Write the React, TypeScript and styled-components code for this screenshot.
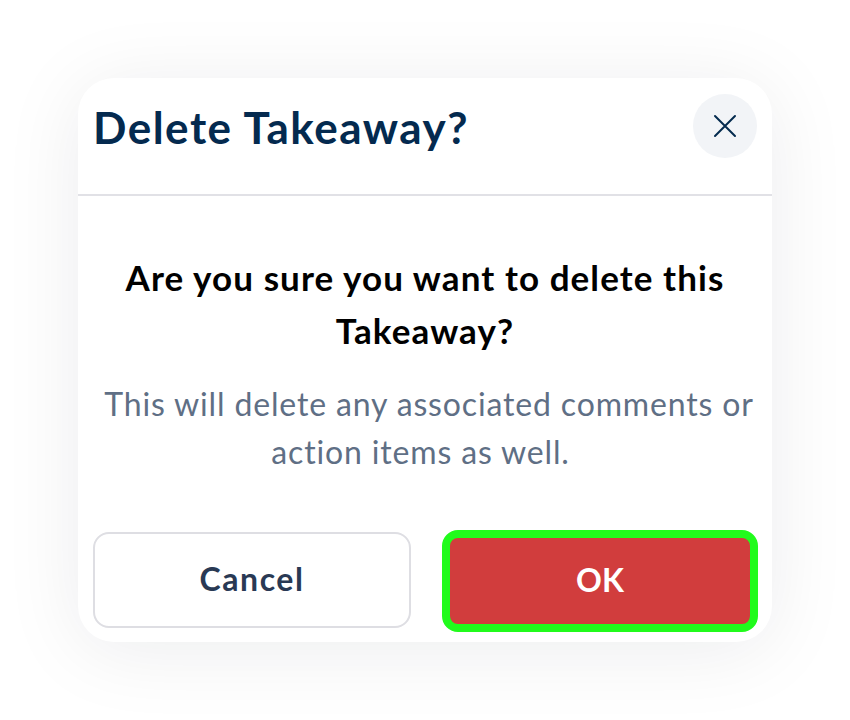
import styled, { createGlobalStyle } from "styled-components";

const GlobalStyle = createGlobalStyle`
  html, body {
    margin: 0;
    height: 100%;
    background: #ffffff;
  }
  #root {
    height: 100%;
  }
`

const Page = styled.div`
  display: flex;
  align-items: center;
  justify-content: center;
  height: 720px;
  font-family: "Lato", "Liberation Sans", sans-serif;
  font-variant-ligatures: none;
`

const Card = styled.div`
  display: flex;
  flex-direction: column;
  box-sizing: border-box;
  width: 694px;
  height: 564px;
  background: #ffffff;
  border-radius: 36px;
  box-shadow: 0 8px 80px rgba(16, 24, 40, 0.08);
`

const Header = styled.div`
  display: flex;
  align-items: flex-start;
  justify-content: space-between;
  box-sizing: border-box;
  height: 118px;
  padding: 16px 15px 0 15px;
  border-bottom: 2px solid #e1e1e6;
`

const Title = styled.h1`
  margin: 0;
  font-size: 44px;
  line-height: 66px;
  font-weight: 700;
  letter-spacing: 1.5px;
  color: #042a4f;
`

const CloseButton = styled.button`
  display: flex;
  align-items: center;
  justify-content: center;
  width: 64px;
  height: 64px;
  padding: 0;
  border: none;
  border-radius: 50%;
  background: #f2f4f7;
`

const Body = styled.div`
  display: flex;
  flex-direction: column;
  align-items: center;
  flex: 1;
  padding: 55px 16px 0;
  text-align: center;
`

const Question = styled.div`
  width: 640px;
  font-size: 35px;
  line-height: 53px;
  font-weight: 700;
  letter-spacing: 1.08px;
  color: #000000;
`

const Note = styled.div`
  width: 680px;
  margin: 23px 9px 0 0;
  font-size: 32px;
  line-height: 48px;
  font-weight: 400;
  letter-spacing: 0.85px;
  text-indent: 17px;
  color: #5f6f85;
`

const Actions = styled.div`
  display: flex;
  align-items: center;
  justify-content: space-between;
  padding: 0 14px 10px 15px;
`

const Button = styled.button<{ $danger?: boolean }>`
  box-sizing: border-box;
  width: ${props => props.$danger ? "316px" : "318px"};
  height: ${props => props.$danger ? "102px" : "96px"};
  margin-bottom: ${props => props.$danger ? "0" : "2px"};
  padding: 0 0 3px;
  font-family: inherit;
  font-size: 32px;
  font-weight: 700;
  letter-spacing: ${props => props.$danger ? "0" : "1.6px"};
  border-radius: 16px;
  border: ${props => props.$danger ? "8px solid #21fb1c" : "2px solid #dedee3"};
  background: ${props => props.$danger ? "#d13d3d" : "#ffffff"};
  color: ${props => props.$danger ? "#ffffff" : "#293954"};
`

const App = () => {
  return (
    <Page>
      <GlobalStyle />
      <Card>
        <Header>
          <Title>Delete Takeaway?</Title>
          <CloseButton aria-label="Close">
            <svg width="24" height="24" viewBox="0 0 24 24" fill="none" stroke="#042a4f" strokeWidth="2" strokeLinecap="round">
              <path d="M2 2 L22 22 M22 2 L2 22" />
            </svg>
          </CloseButton>
        </Header>
        <Body>
          <Question>Are you sure you want to delete this Takeaway?</Question>
          <Note>This will delete any associated comments or action items as well.</Note>
        </Body>
        <Actions>
          <Button>Cancel</Button>
          <Button $danger>OK</Button>
        </Actions>
      </Card>
    </Page>
  );
}

export default App;
